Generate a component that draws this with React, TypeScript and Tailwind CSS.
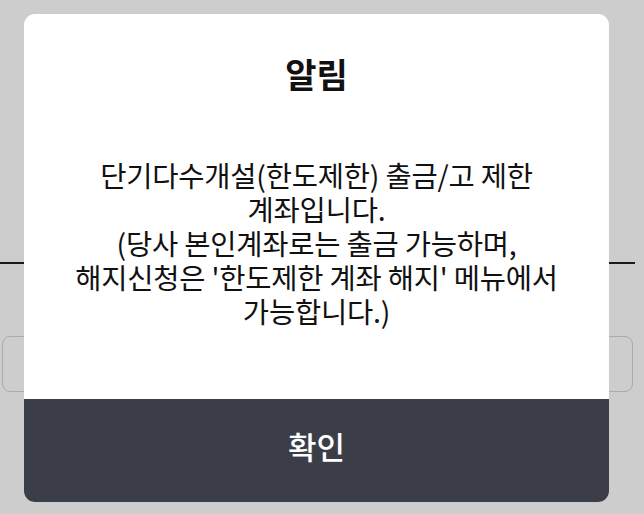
export default function App() {
  const font = { fontFamily: '"Noto Sans CJK KR", "Noto Sans", sans-serif' };
  return (
    <div className="relative w-[644px] h-[514px] overflow-hidden bg-[#cdcdcd]" style={font}>
      {/* page behind the dimmed overlay */}
      <div className="pt-[262px]">
        <div className="h-[2px] w-[635px] bg-[#1a1a1a]" />
        <div className="mt-[72px] ml-[2px] h-[56px] w-[631px] rounded-lg border border-[#ababab]" />
      </div>

      {/* alert dialog */}
      <div className="absolute left-[24px] top-[14px] flex h-[488px] w-[585px] flex-col overflow-hidden rounded-[11px] bg-white">
        <h2 className="pt-[38px] text-center text-[34px] font-bold leading-[44px] text-[#111]">알림</h2>
        <p className="mt-[62px] flex-1 text-center text-[28.5px] leading-[34px] tracking-[-0.2px] text-[#111]">
          단기다수개설(한도제한) 출금/고 제한
          <br />
          계좌입니다.
          <br />
          (당사 본인계좌로는 출금 가능하며,
          <br />
          해지신청은 '한도제한 계좌 해지' 메뉴에서
          <br />
          가능합니다.)
        </p>
        <button
          type="button"
          className="flex h-[103px] w-full items-center justify-center bg-[#3b3e48] pb-[8px] text-[31px] font-medium text-white"
        >
          확인
        </button>
      </div>
    </div>
  );
}
